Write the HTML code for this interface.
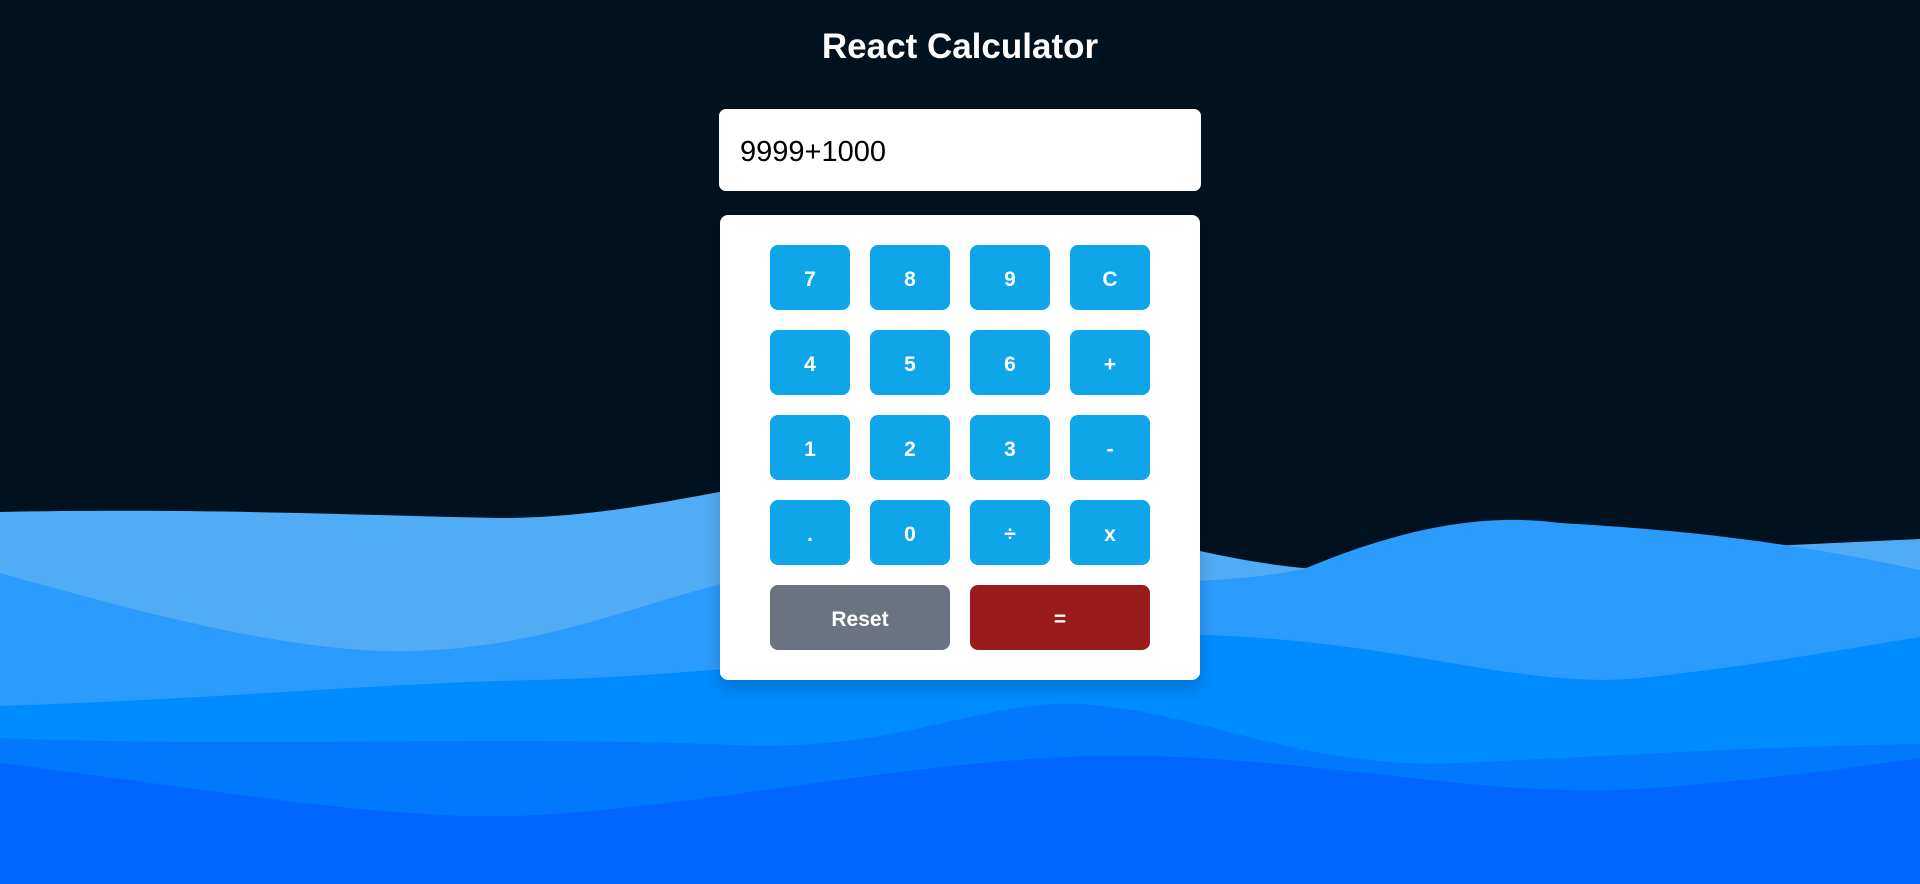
<!DOCTYPE html>
<html><head><meta charset="utf-8"><style>
*{margin:0;padding:0;box-sizing:border-box}
html,body{width:1920px;height:884px;overflow:hidden;background:#001220;font-family:"Segoe UI","Liberation Sans",sans-serif}
svg.bg{position:absolute;left:0;top:0}
h1{position:absolute;top:22px;left:0;width:1920px;text-align:center;color:#fff;font-size:35px;font-weight:bold;line-height:50px}
.disp{position:absolute;left:719px;top:109px;width:482px;height:82px;background:#fff;border-radius:7px;font-size:29px;color:#000;padding-left:21px;line-height:86px}
.pad{position:absolute;left:720px;top:215px;width:480px;height:465px;background:#fff;border-radius:8px;box-shadow:0 8px 16px rgba(0,0,0,.18)}
.b{position:absolute;width:80px;height:65px;background:#0ea5e9;border-radius:8px;color:#fff;font-weight:bold;font-size:21px;text-align:center;line-height:69px}
</style></head><body>
<svg class="bg" width="1920" height="884" viewBox="0 0 1920 884">
<path fill="#51acf6" d="M0 512 C200 508 350 515 500 518 C600 518 680 498 760 485 L1200 551 C1240 560 1280 566 1304 568 L1920 539 L1920 884 L0 884Z"/>
<path fill="#2b9bfd" d="M0 573 C150 615 300 655 416 651 C560 645 640 600 760 575 C1000 560 1150 600 1304 569 C1420 520 1500 515 1560 523 C1680 530 1780 540 1920 570 L1920 884 L0 884Z"/>
<path fill="#008bff" d="M0 706 C200 700 400 682 539 680 C800 672 1000 630 1200 635 C1400 640 1520 690 1641 678 C1760 665 1840 650 1920 637 L1920 884 L0 884Z"/>
<path fill="#0079ff" d="M0 738 C250 748 500 735 735 745 C900 752 980 700 1078 704 C1200 710 1300 770 1457 763 C1600 757 1760 746 1920 744 L1920 884 L0 884Z"/>
<path fill="#0066ff" d="M0 763 C180 785 380 820 514 816 C700 810 950 750 1151 756 C1350 762 1500 800 1653 788 C1780 778 1850 768 1920 758 L1920 884 L0 884Z"/>
</svg>
<h1>React Calculator</h1>
<div class="disp">9999+1000</div>
<div class="pad"></div>
<div class="b" style="left:770px;top:245px">7</div><div class="b" style="left:870px;top:245px">8</div><div class="b" style="left:970px;top:245px">9</div><div class="b" style="left:1070px;top:245px">C</div>
<div class="b" style="left:770px;top:330px">4</div><div class="b" style="left:870px;top:330px">5</div><div class="b" style="left:970px;top:330px">6</div><div class="b" style="left:1070px;top:330px">+</div>
<div class="b" style="left:770px;top:415px">1</div><div class="b" style="left:870px;top:415px">2</div><div class="b" style="left:970px;top:415px">3</div><div class="b" style="left:1070px;top:415px">-</div>
<div class="b" style="left:770px;top:500px">.</div><div class="b" style="left:870px;top:500px">0</div><div class="b" style="left:970px;top:500px">÷</div><div class="b" style="left:1070px;top:500px">x</div>
<div class="b" style="left:770px;top:585px;width:180px;background:#6b7280">Reset</div>
<div class="b" style="left:970px;top:585px;width:180px;background:#991b1b">=</div>
</body></html>
